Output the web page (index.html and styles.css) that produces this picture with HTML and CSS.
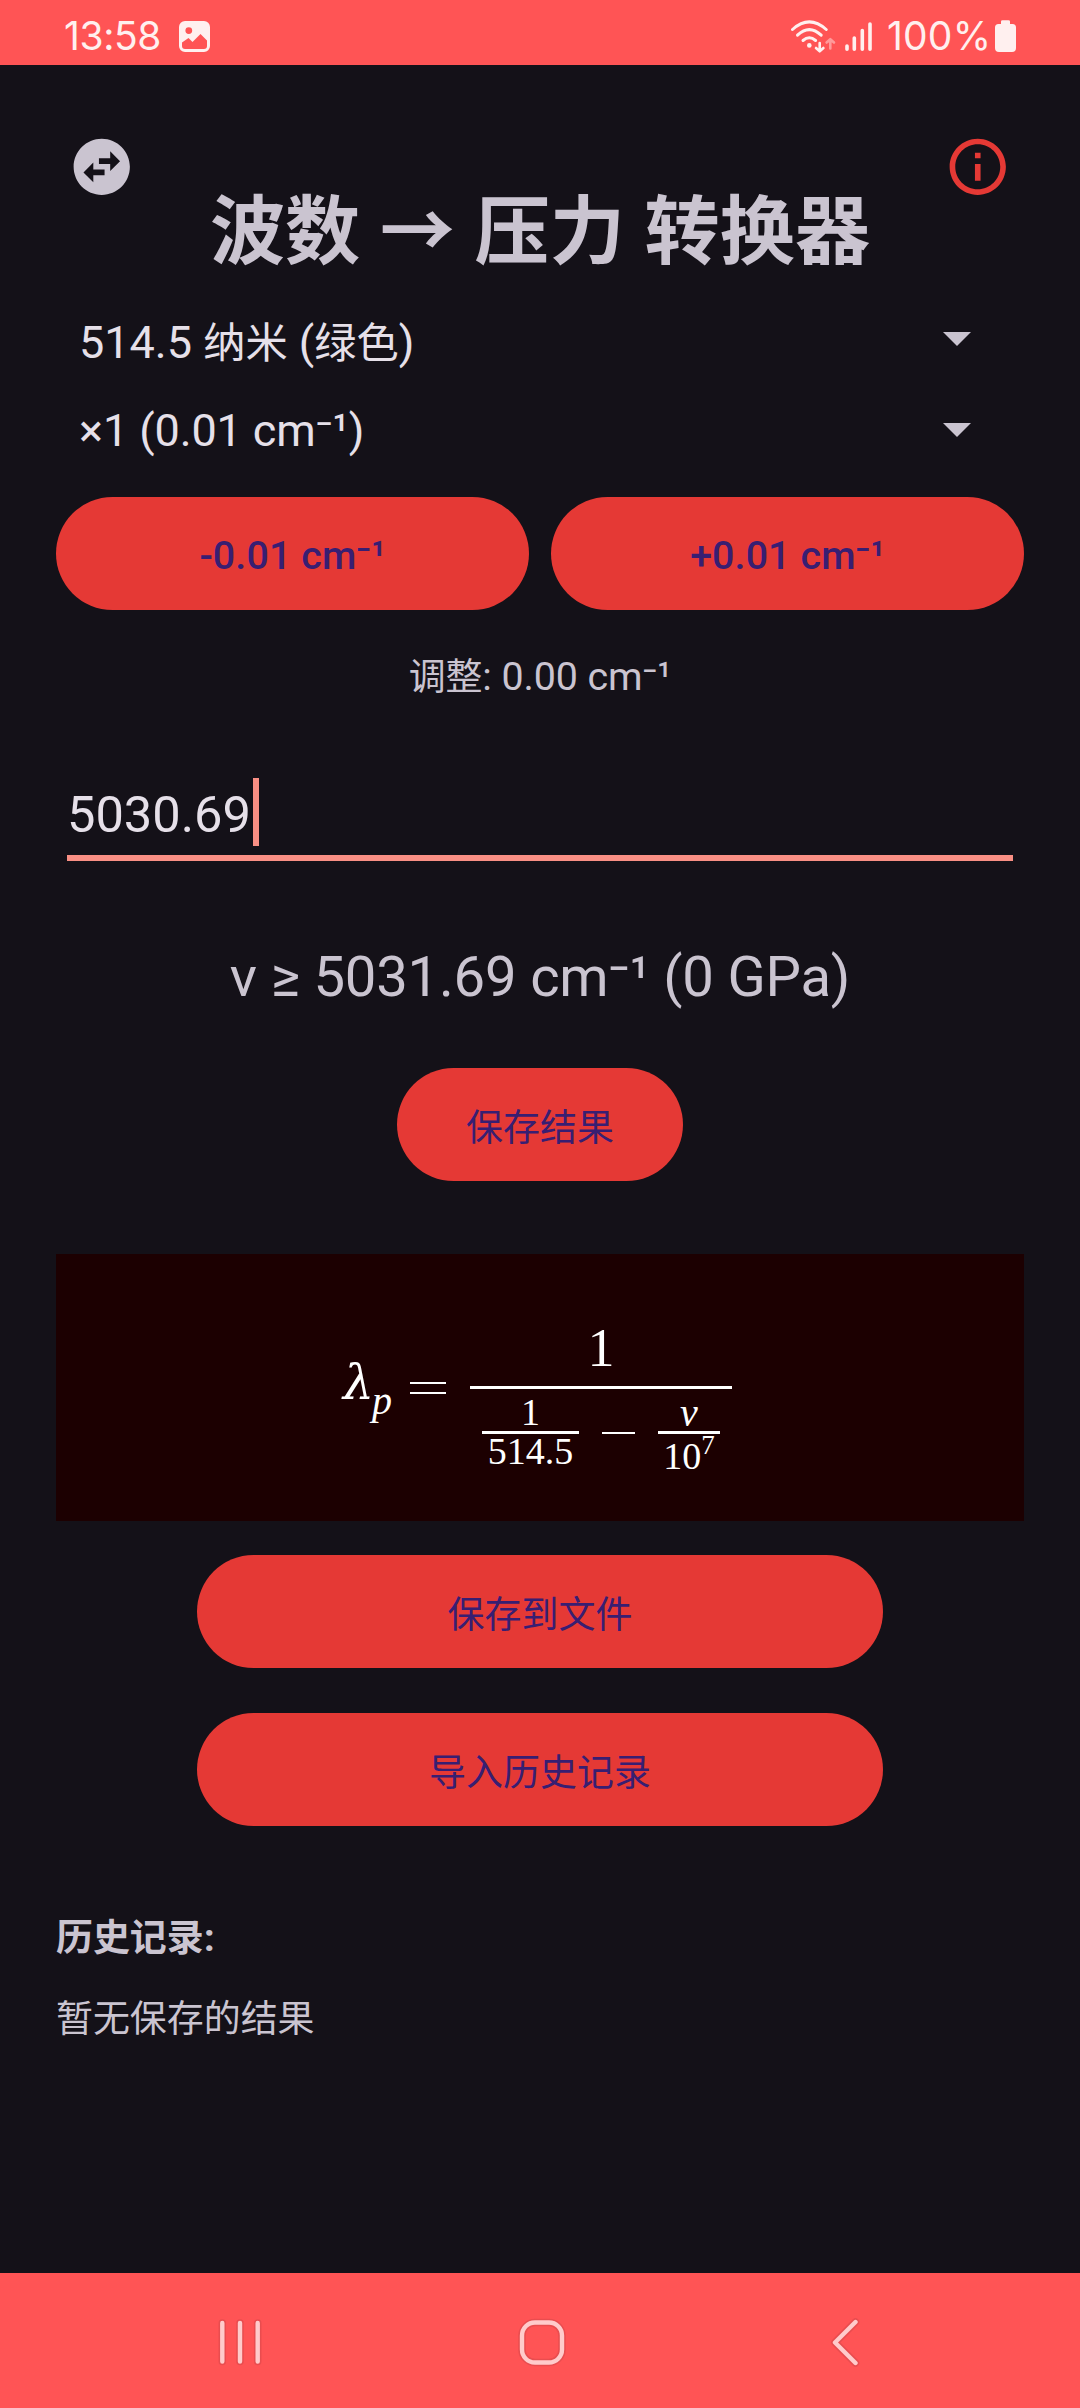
FILE: index.html
```html
<!DOCTYPE html>
<html lang="zh-CN">
<head>
<meta charset="utf-8">
<title>波数 → 压力 转换器</title>
<link rel="stylesheet" href="styles.css">
</head>
<body>
<div class="screen">
  <div class="status">
    <span class="clock">13:58</span>
    <svg class="photo" viewBox="0 0 31 31" width="31" height="31">
      <path fill="#fff0ef" fill-rule="evenodd" d="M6 0h19a6 6 0 0 1 6 6v19a6 6 0 0 1-6 6H6a6 6 0 0 1-6-6V6a6 6 0 0 1 6-6zM3 21.500V25a3 3 0 0 0 3 3h19a3 3 0 0 0 3-3v-5.500l-6.500-6.500L13.500 21l-4-4zM9.800 6.200a3.400 3.400 0 1 0 0 6.800 3.400 3.400 0 0 0 0-6.800z"/>
    </svg>
    <svg class="signals" viewBox="0 0 84 36" width="84" height="36" fill="none" stroke="#fff0ef" stroke-linecap="round">
      <g stroke-width="3">
        <path d="M3.500 11.500Q20.300-3.700 37.200 11.500"/>
        <path d="M8.500 17.200Q20.300 6 32.200 17.200"/>
        <path d="M14 22.500Q20.300 17 26.600 22.500"/>
      </g>
      <circle cx="20.300" cy="27.400" r="2.300" fill="#fff0ef" stroke="none"/>
      <g stroke-width="2.600" stroke-linejoin="round">
        <path d="M30.700 25v8M27 30l3.700 3.300 3.700-3.300"/>
        <path d="M41.300 30.500v-9M37.600 24.500l3.700-3.300 3.700 3.300" opacity=".45"/>
      </g>
      <path stroke-width="3.600" d="M58 28v3.300M65.300 20v11.300M73.300 12.500v18.800M81 6v25.300"/>
    </svg>
    <span class="percent">100%</span>
    <svg class="battery" viewBox="0 0 21 32" width="21" height="32" fill="#fff0ef">
      <path d="M6 1.500Q6 .2 7.500.2h6Q15 .2 15 1.500V4h2.500A3.500 3.500 0 0 1 21 7.500V28a4 4 0 0 1-4 4H4a4 4 0 0 1-4-4V7.500A3.500 3.500 0 0 1 3.500 4H6z"/>
    </svg>
  </div>

  <main class="content">
    <header class="header">
      <svg class="icon" viewBox="0 0 24 24" fill="#cac4d0"><path d="M22 12c0-5.520-4.480-10-10-10S2 6.480 2 12s4.480 10 10 10 10-4.480 10-10zm-7-5.500l3.500 3.500-3.500 3.500V11h-4V9h4V6.500zm-6 11L5.500 14 9 10.500V13h4v2H9v2.500z"/></svg>
      <h1 class="title"><span class="zh">波数</span> <span class="zh">→</span> <span class="zh">压力</span> <span class="zh">转换器</span></h1>
      <svg class="icon" viewBox="0 0 24 24" fill="#e53935"><path d="M11 7h2v2h-2zm0 4h2v6h-2zm1-9C6.480 2 2 6.480 2 12s4.480 10 10 10 10-4.480 10-10S17.520 2 12 2zm0 18c-4.410 0-8-3.590-8-8s3.590-8 8-8 8 3.590 8 8-3.590 8-8 8z"/></svg>
    </header>

    <div class="spinner spinner-laser">
      <span class="spinner-text">514.5 <span class="zh">纳米</span> (<span class="zh">绿色</span>)</span>
      <svg class="caret" viewBox="0 0 28 14" width="28" height="14"><path fill="#cac4d0" d="M0 0h28L14 14z"/></svg>
    </div>
    <div class="spinner">
      <span class="spinner-step">×1 (0.01 cm⁻¹)</span>
      <svg class="caret" viewBox="0 0 28 14" width="28" height="14"><path fill="#cac4d0" d="M0 0h28L14 14z"/></svg>
    </div>

    <div class="steps">
      <button class="btn">-0.01 cm⁻¹</button>
      <button class="btn">+0.01 cm⁻¹</button>
    </div>
    <p class="adjust"><span class="zh">调整</span>: 0.00 cm⁻¹</p>

    <div class="field"><span>5030.69</span><i class="cursor"></i></div>

    <p class="result">v ≥ 5031.69 cm⁻¹ (0 GPa)</p>
    <button class="btn btn-zh btn-save"><span class="zh">保存结果</span></button>

    <div class="formula">
      <span class="lambda">λ</span><span class="sub">p</span>
      <span class="equals"></span>
      <div class="frac">
        <span class="num">1</span>
        <div class="den">
          <div class="small-frac">
            <span class="small-num">1</span>
            <span class="small-den">514.5</span>
          </div>
          <span class="minus"></span>
          <div class="small-frac power">
            <span class="small-num nu">ν</span>
            <span class="small-den">10<span class="exp">7</span></span>
          </div>
        </div>
      </div>
    </div>

    <button class="btn btn-zh btn-wide btn-file"><span class="zh">保存到文件</span></button>
    <button class="btn btn-zh btn-wide btn-import"><span class="zh">导入历史记录</span></button>

    <h2 class="history"><span class="zh">历史记录</span>:</h2>
    <p class="empty"><span class="zh">暂无保存的结果</span></p>
  </main>

  <nav class="nav">
    <svg viewBox="0 0 1080 135" width="1080" height="135" fill="none" stroke-linecap="round" stroke-linejoin="round">
      <g stroke="#e94d4f" stroke-width="7.500">
        <path d="M222.300 50v38.500M240 50v38.500M257.700 50v38.500M855.500 49L835 69.500l20.500 20.500"/>
        <rect x="522" y="49.500" width="40" height="40" rx="13"/>
      </g>
      <g stroke="#ffcbcb" stroke-width="4.400">
        <path d="M222.300 50v38.500M240 50v38.500M257.700 50v38.500M855.500 49L835 69.500l20.500 20.500"/>
        <rect x="522" y="49.500" width="40" height="40" rx="13"/>
      </g>
    </svg>
  </nav>
</div>
</body>
</html>
```

FILE: styles.css
```css
* { box-sizing: border-box; }

body {
  margin: 0;
  background: #141118;
  color: #cac4d0;
  font-family: Roboto, "Noto Sans CJK SC", sans-serif;
}

h1, h2, p { margin: 0; }

.screen {
  display: flex;
  flex-direction: column;
  width: 1080px;
  height: 2408px;
  overflow: hidden;
}

/* Han glyphs run slightly smaller than the Latin ones and never stretch the line */
.zh {
  font-family: "Noto Sans CJK SC", sans-serif;
  font-size: 0.938em;
  line-height: 0;
}

/* system status bar */
.status {
  display: flex;
  flex: none;
  align-items: flex-start;
  height: 65px;
  padding: 0 64px 0 64px;
  background: #ff5455;
  color: #fff0ef;
  font-family: Inter, sans-serif;
  font-size: 39px;
  line-height: 72px;
  white-space: nowrap;
}
.clock { width: 115px; letter-spacing: -0.400px; }
.photo { margin-top: 21px; }
.signals { margin: 18px 0 0 auto; }
.percent { width: 122px; padding-left: 14px; letter-spacing: 0.200px; }
.battery { margin-top: 20px; }

.content {
  display: flex;
  flex: 1;
  flex-direction: column;
  padding: 68px 56px 0;
}

.header {
  display: flex;
  flex: none;
  justify-content: space-between;
  height: 144px;
  padding: 0 12px;
}
.icon { flex: none; width: 67.500px; height: 67.500px; }
.title {
  margin-top: 52px;
  font-size: 78.750px;
  font-weight: 700;
  line-height: 92px;
  white-space: nowrap;
}
.title .zh { font-size: 75.200px; }

.spinner {
  display: flex;
  flex: none;
  align-items: center;
  justify-content: space-between;
  height: 90px;
  padding: 0 53px 0 23px;
  color: #e6e0e9;
  font-size: 45px;
  line-height: 60px;
}
.spinner-laser { height: 92px; margin-top: 16px; }
.spinner-text { padding-top: 7px; }
.spinner-step { padding-top: 1px; letter-spacing: -0.100px; }

.btn {
  flex: none;
  height: 113px;
  padding: 4px 0 0;
  border: 0;
  border-radius: 57px;
  background: #e53935;
  color: #381e72;
  font: 500 39.400px/46px Roboto, "Noto Sans CJK SC", sans-serif;
  letter-spacing: 0.100px;
}
.btn-zh { padding-top: 6px; font-weight: 400; }

.steps {
  display: grid;
  flex: none;
  grid-template-columns: 1fr 1fr;
  gap: 22px;
  margin-top: 22px;
}

.adjust {
  margin-top: 44px;
  font-size: 39.400px;
  line-height: 46px;
  letter-spacing: -0.100px;
  text-align: center;
}

.field {
  display: flex;
  flex: none;
  height: 83px;
  margin: 78px 11px 0;
  border-bottom: 6px solid #f98f84;
  color: #e6e0e9;
  font-size: 50.600px;
  line-height: 74px;
}
.cursor { width: 6px; height: 68px; margin-left: 2px; background: #f98f84; }

.result {
  margin-top: 83px;
  font-size: 56.250px;
  line-height: 66px;
  letter-spacing: -0.220px;
  text-align: center;
}

.btn-save { align-self: center; width: 286px; margin-top: 58px; }

/* equation card */
.formula {
  display: flex;
  flex: none;
  align-items: flex-start;
  height: 267px;
  margin-top: 73px;
  padding-left: 287px;
  background: #1c0001;
  color: #fff;
  font-family: "Liberation Serif", serif;
}
.lambda {
  width: 29px;
  margin-top: 99px;
  font-family: "DejaVu Serif", serif;
  font-size: 49px;
  font-style: italic;
  line-height: 60px;
}
.sub { width: 38px; margin-top: 127px; font-size: 40px; font-style: italic; line-height: 40px; }
.equals {
  width: 36px;
  height: 12px;
  margin-top: 128px;
  border: solid #fff;
  border-width: 2px 0;
}
.frac {
  display: flex;
  flex-direction: column;
  width: 262px;
  margin: 62px 0 0 24px;
}
.num {
  height: 73px;
  border-bottom: 3px solid #fff;
  font-size: 54px;
  line-height: 64px;
  text-align: center;
}
.den { display: flex; padding: 7px 12px 0; }
.small-frac { display: flex; flex-direction: column; width: 97px; text-align: center; font-size: 38px; }
.power { width: 62px; }
.small-num { height: 38px; border-bottom: 3px solid #fff; line-height: 33px; }
.nu { font-size: 40px; font-style: italic; }
.small-den { line-height: 34px; }
.power .small-den { padding-top: 5px; }
.exp { font-size: 27px; line-height: 0; vertical-align: 15px; }
.minus { width: 33px; height: 2px; margin: 36px 23px 0; background: #fff; }

.btn-wide { align-self: center; width: 686px; }
.btn-file { margin-top: 34px; }
.btn-import { margin-top: 45px; }

.history {
  margin-top: 89px;
  font-size: 39.400px;
  font-weight: 700;
  line-height: 46px;
}
.empty { margin-top: 35px; font-size: 39.400px; line-height: 46px; }

.nav { flex: none; height: 135px; background: #ff5455; }
.nav svg { display: block; }
```
